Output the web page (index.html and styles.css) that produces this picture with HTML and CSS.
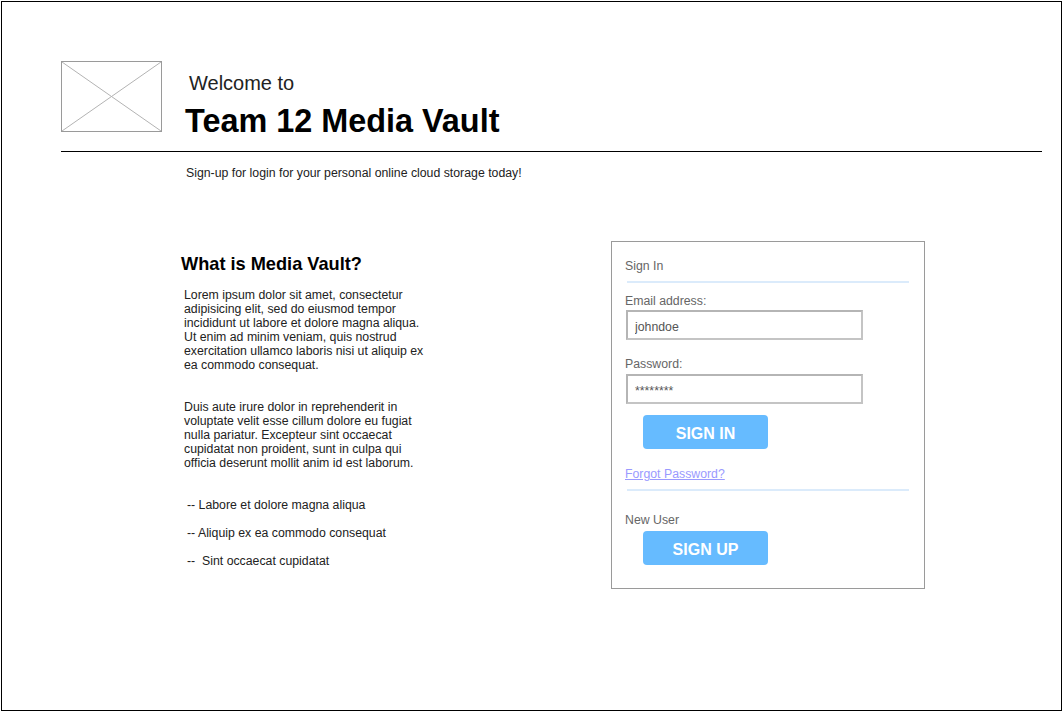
FILE: index.html
```html
<!DOCTYPE html>
<html lang="en">
<head>
<meta charset="utf-8">
<title>Team 12 Media Vault</title>
<link rel="stylesheet" href="styles.css">
</head>
<body>
<div class="frame">
  <header class="header">
    <div class="logo">
      <svg class="logo-svg" viewBox="0 0 99 69" preserveAspectRatio="none" width="99" height="69">
        <line x1="0" y1="0" x2="99" y2="69" stroke="#b3b3b3" stroke-width="1"/>
        <line x1="99" y1="0" x2="0" y2="69" stroke="#b3b3b3" stroke-width="1"/>
      </svg>
    </div>
    <div class="titles">
      <div class="welcome">Welcome to</div>
      <h1 class="title">Team 12 Media Vault</h1>
    </div>
  </header>
  <hr class="rule">
  <p class="tagline">Sign-up for login for your personal online cloud storage today!</p>
  <main class="main">
    <section class="about">
      <h2 class="about-title">What is Media Vault?</h2>
      <p class="para">Lorem ipsum dolor sit amet, consectetur adipisicing elit, sed do eiusmod tempor incididunt ut labore et dolore magna aliqua. Ut enim ad minim veniam, quis nostrud exercitation ullamco laboris nisi ut aliquip ex ea commodo consequat.</p>
      <p class="para para-second">Duis aute irure dolor in reprehenderit in voluptate velit esse cillum dolore eu fugiat nulla pariatur. Excepteur sint occaecat cupidatat non proident, sunt in culpa qui officia deserunt mollit anim id est laborum.</p>
      <ul class="points">
        <li>-- Labore et dolore magna aliqua</li>
        <li>-- Aliquip ex ea commodo consequat</li>
        <li>--&nbsp; Sint occaecat cupidatat</li>
      </ul>
    </section>
    <aside class="panel">
      <div class="label label-signin">Sign In</div>
      <div class="divider divider-top"></div>
      <label class="label label-email" for="email">Email address:</label>
      <input class="field field-email" id="email" type="text" value="johndoe">
      <label class="label label-pass" for="pass">Password:</label>
      <input class="field field-pass" id="pass" type="text" value="********">
      <button class="btn btn-signin" type="button">SIGN IN</button>
      <a class="forgot" href="#">Forgot Password?</a>
      <div class="divider divider-bottom"></div>
      <div class="label label-new">New User</div>
      <button class="btn btn-signup" type="button">SIGN UP</button>
    </aside>
  </main>
</div>
</body>
</html>
```

FILE: styles.css
```css
html, body {
  margin: 0;
  padding: 0;
  background: #ffffff;
}

body {
  padding: 1px 0 0 1px;
  font-family: "Liberation Sans", Arial, sans-serif;
  color: #1e1e1e;
}

.frame {
  width: 1061px;
  height: 710px;
  box-sizing: border-box;
  border: 1px solid #000000;
  background: #ffffff;
}

/* Header */
.header {
  display: flex;
  align-items: flex-start;
  padding: 59px 0 0 59px;
}

.logo {
  width: 101px;
  height: 71px;
  box-sizing: border-box;
  border: 1px solid #9a9a9a;
  flex: none;
}

.logo-svg {
  display: block;
}

.titles {
  margin-left: 23px;
  display: flex;
  flex-direction: column;
}

.welcome {
  margin-top: 11px;
  padding-left: 4px;
  font-size: 20px;
  line-height: 23px;
  color: #222222;
}

.title {
  margin: 8px 0 0 0;
  font-size: 32.4px;
  line-height: 37px;
  font-weight: bold;
  color: #000000;
}

.rule {
  margin: 11px 0 0 59px;
  width: 981px;
  height: 0;
  border: 0;
  border-top: 1px solid #000000;
}

.tagline {
  margin: 14px 0 0 184px;
  font-size: 12.3px;
  line-height: 14px;
  color: #222222;
}

/* Main */
.main {
  display: flex;
  align-items: flex-start;
  margin-top: 61px;
  padding-left: 180px;
}

.about {
  width: 429px;
  flex: none;
  padding-top: 13px;
}

.about-title {
  margin: 0 0 0 -1px;
  font-size: 18.2px;
  line-height: 21px;
  font-weight: bold;
  color: #000000;
}

.para {
  margin: 13px 0 0 2px;
  width: 242px;
  font-size: 12.3px;
  line-height: 14px;
  color: #222222;
}

.para-second {
  margin-top: 28px;
}

.points {
  list-style: none;
  margin: 28px 0 0 5px;
  padding: 0;
  font-size: 12.3px;
  line-height: 14px;
  color: #222222;
}

.points li + li {
  margin-top: 14px;
}

/* Sign in panel */
.panel {
  width: 314px;
  height: 348px;
  box-sizing: border-box;
  border: 1px solid #9a9a9a;
  padding: 17px 0 0 13px;
  display: flex;
  flex-direction: column;
  align-items: flex-start;
}

.label {
  display: block;
  font-size: 12.3px;
  line-height: 14px;
  color: #666666;
}

.divider {
  margin-left: 2px;
  width: 282px;
  height: 2px;
  background: #dbebfb;
}

.divider-top {
  margin-top: 8px;
}

.label-email {
  margin-top: 11px;
}

.field {
  display: block;
  margin: 2px 0 0 1px;
  width: 237px;
  height: 30px;
  box-sizing: border-box;
  border: 2px solid #c4c4c4;
  border-top-color: #b5b5b5;
  border-left-color: #b5b5b5;
  padding: 3px 7px 0 7px;
  font-family: "Liberation Sans", Arial, sans-serif;
  font-size: 12.3px;
  color: #555555;
  background: #ffffff;
  outline: none;
}

.label-pass {
  margin-top: 17px;
}

.field-pass {
  margin-top: 3px;
}

.btn {
  margin-left: 18px;
  width: 125px;
  height: 34px;
  border: 0;
  border-radius: 4px;
  background: #66bbff;
  color: #ffffff;
  font-family: "Liberation Sans", Arial, sans-serif;
  font-weight: bold;
  font-size: 16px;
  padding: 3px 0 0 0;
  cursor: pointer;
}

.btn-signin {
  margin-top: 11px;
}

.forgot {
  margin-top: 18px;
  font-size: 12.3px;
  line-height: 14px;
  color: #9a9aff;
  text-decoration: underline;
}

.divider-bottom {
  margin-top: 8px;
}

.label-new {
  margin-top: 22px;
}

.btn-signup {
  margin-top: 4px;
}
```
